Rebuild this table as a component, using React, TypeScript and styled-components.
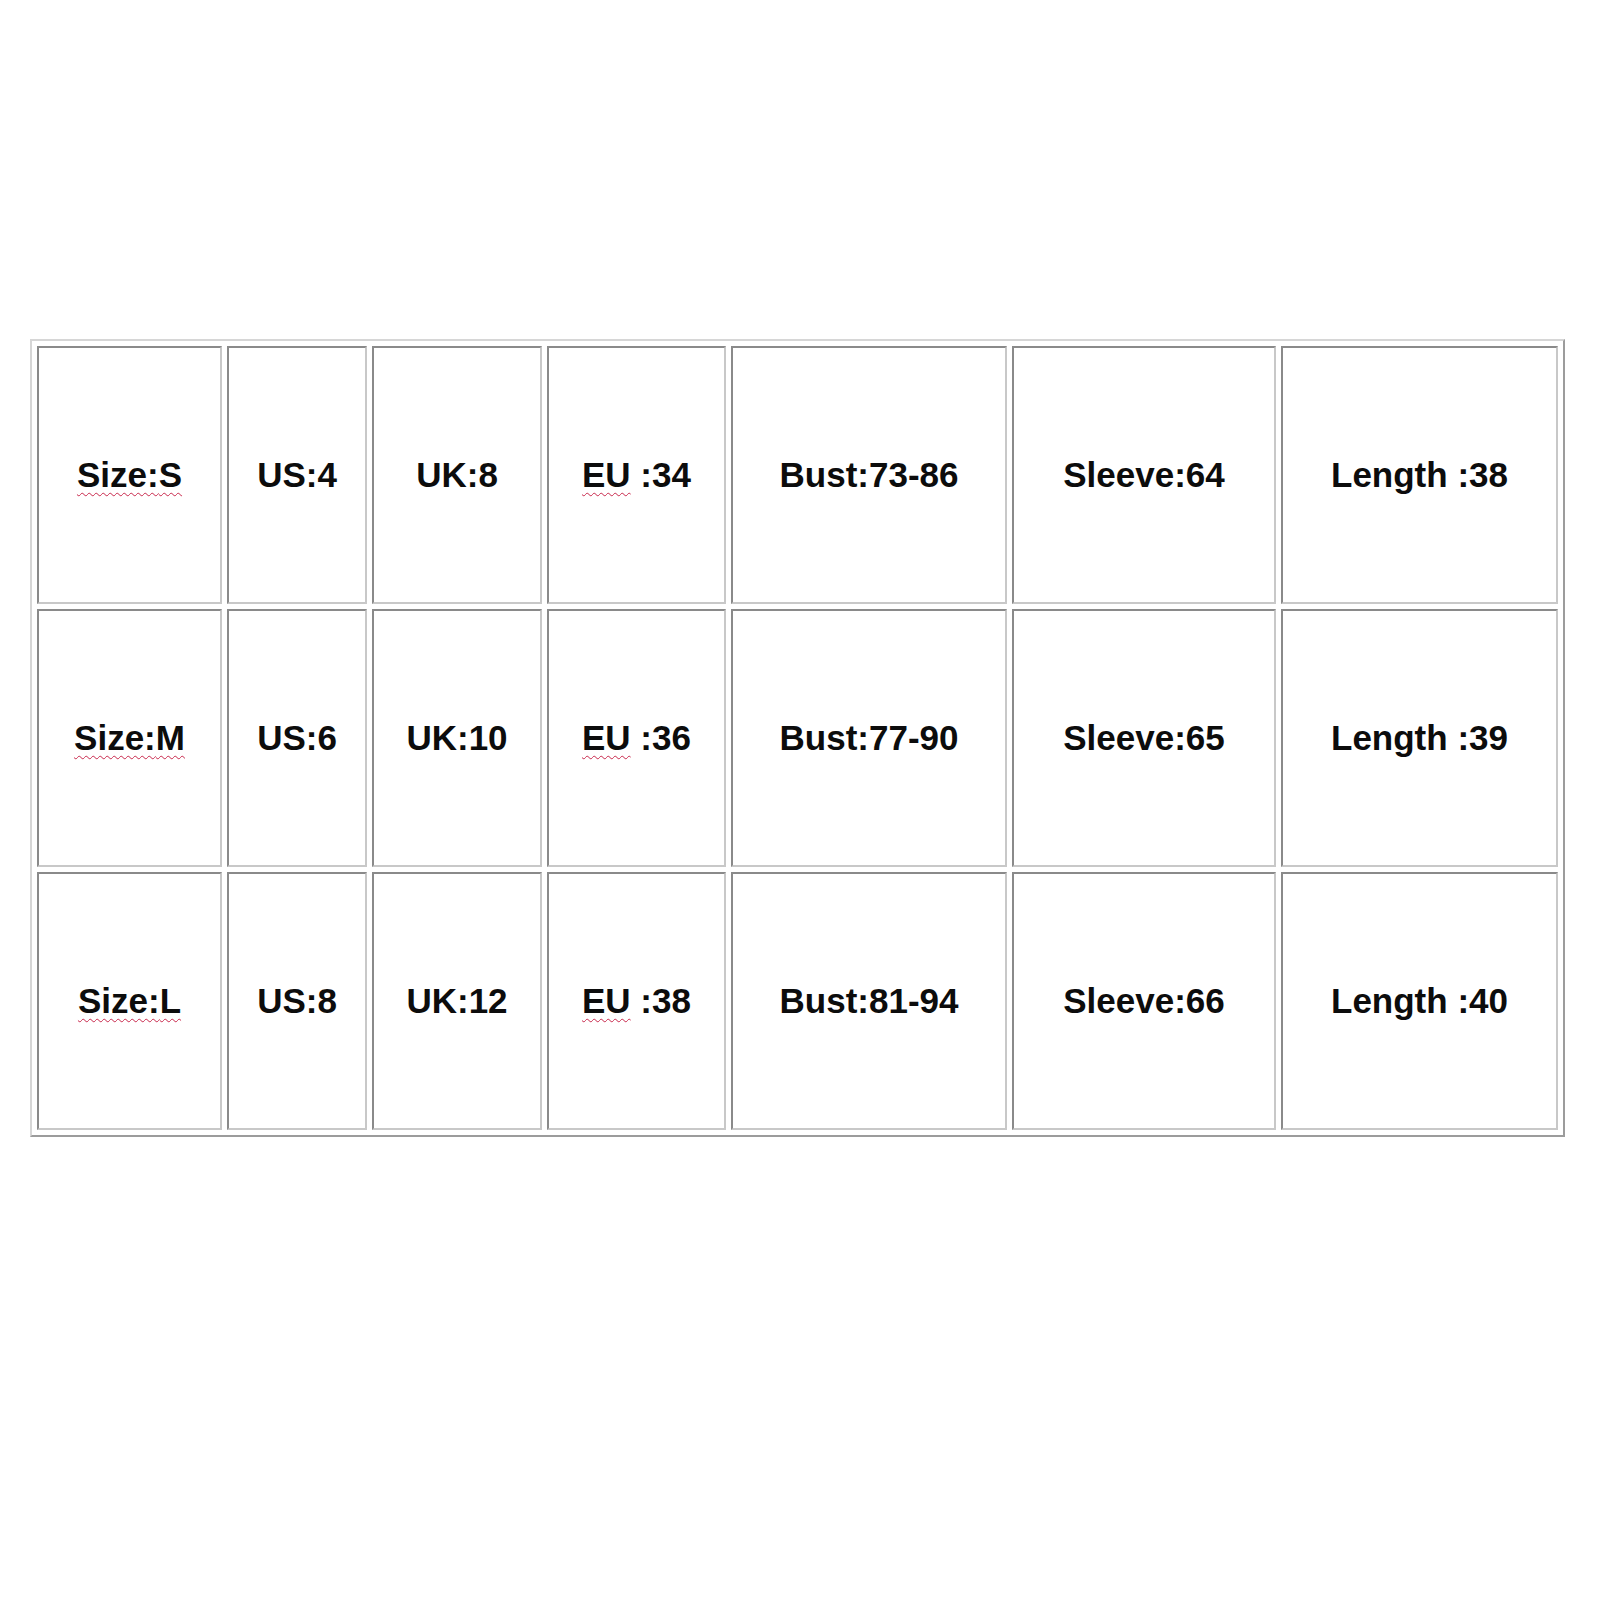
import React from "react"
import styled, { createGlobalStyle } from "styled-components"

const GlobalStyle = createGlobalStyle`
  html, body {
    margin: 0;
    padding: 0;
    background: #fff;
  }
  body {
    font-family: "Liberation Sans", Arial, sans-serif;
  }
`

const Page = styled.div`
  width: 1600px;
  height: 1600px;
  padding: 339px 0 0 30px;
  box-sizing: border-box;
  background: #fff;
`

const SizeTable = styled.div`
  display: grid;
  grid-template-columns: 185px 140px 170px 179px 276px 264px 277px;
  grid-auto-rows: 258px;
  gap: 5px;
  padding: 5px;
  width: max-content;
  border: 2px solid;
  border-color: #d6d6d6 #9c9c9c #9c9c9c #d6d6d6;
`

const Cell = styled.div`
  display: flex;
  align-items: center;
  justify-content: center;
  box-sizing: border-box;
  border: 2px solid;
  border-color: #8a8a8a #c8c8c8 #c8c8c8 #8a8a8a;
  font-size: 35px;
  font-weight: 700;
  color: #0c0c0c;
  white-space: pre;
`

const Squiggle = styled.span`
  text-decoration-line: underline;
  text-decoration-style: wavy;
  text-decoration-color: #c8284c;
  text-decoration-thickness: 1px;
  text-underline-offset: 5px;
`

type Row = {
  size: string
  us: string
  uk: string
  eu: string
  bust: string
  sleeve: string
  length: string
}

const rows: Row[] = [
  { size: "S", us: "4", uk: "8", eu: "34", bust: "73-86", sleeve: "64", length: "38" },
  { size: "M", us: "6", uk: "10", eu: "36", bust: "77-90", sleeve: "65", length: "39" },
  { size: "L", us: "8", uk: "12", eu: "38", bust: "81-94", sleeve: "66", length: "40" },
]

export default function App() {
  return (
    <>
      <GlobalStyle />
      <Page>
        <SizeTable>
          {rows.map(r => (
            <React.Fragment key={r.size}>
              <Cell>
                <Squiggle>Size:{r.size}</Squiggle>
              </Cell>
              <Cell>US:{r.us}</Cell>
              <Cell>UK:{r.uk}</Cell>
              <Cell>
                <Squiggle>EU</Squiggle> :{r.eu}
              </Cell>
              <Cell>Bust:{r.bust}</Cell>
              <Cell>Sleeve:{r.sleeve}</Cell>
              <Cell>Length :{r.length}</Cell>
            </React.Fragment>
          ))}
        </SizeTable>
      </Page>
    </>
  )
}
